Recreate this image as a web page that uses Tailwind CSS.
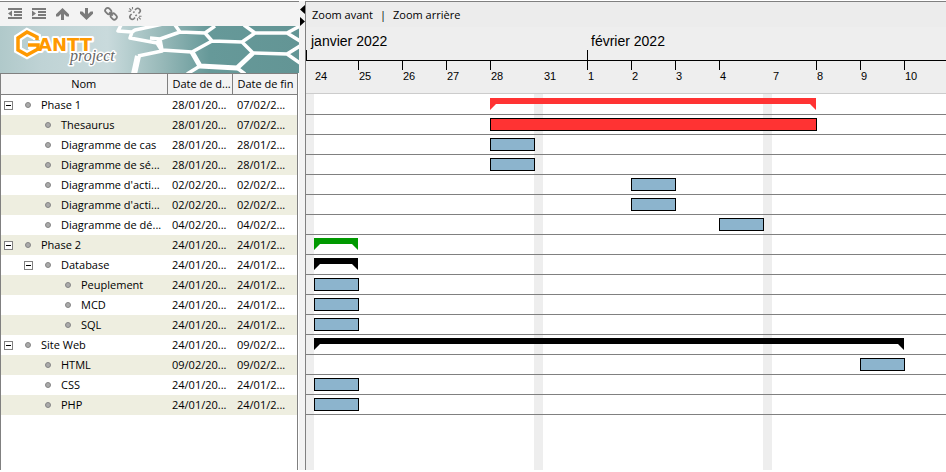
<!DOCTYPE html>
<html lang="fr">
<head>
<meta charset="utf-8">
<meta name="viewport" content="width=device-width, initial-scale=1">
<title>GanttProject</title>
<script src="https://cdn.jsdelivr.net/npm/@tailwindcss/browser@4"></script>
</head>
<body class="flex min-h-screen bg-white pt-px pb-[2px] font-['Open_Sans','Noto_Sans',sans-serif] text-[11px] leading-[20px] text-black">

<section class="flex w-[299px] shrink-0 flex-col border-t border-[#808080]">
  <div class="flex h-[24px] items-center gap-[8px] bg-[#f3f3f3] px-[7px] text-[#7b7b7b]" role="toolbar" aria-label="Tâches">
    <button type="button" aria-label="Désindenter" class="size-[16px]">
      <svg class="size-[16px]" viewBox="0 0 16 16" fill="currentColor"><path d="M1 2h14v2H1zM7 5h8v2H7zM7 8h8v2H7zM1 11h14v2H1zM1 7.500l4-3v6z"/></svg>
    </button>
    <button type="button" aria-label="Indenter" class="size-[16px]">
      <svg class="size-[16px]" viewBox="0 0 16 16" fill="currentColor"><path d="M1 2h14v2H1zM7 5h8v2H7zM7 8h8v2H7zM1 11h14v2H1zM5 7.500l-4-3v6z"/></svg>
    </button>
    <button type="button" aria-label="Monter" class="size-[16px]">
      <svg class="size-[16px]" viewBox="0 0 16 16" fill="currentColor"><path d="M7.500 2L14 8.300V10.500H11.600L9 8V14H6V8L3.400 10.500H1V8.300z"/></svg>
    </button>
    <button type="button" aria-label="Descendre" class="size-[16px]">
      <svg class="size-[16px]" viewBox="0 0 16 16" fill="currentColor"><path d="M7.500 14L14 7.700V5.500H11.600L9 8V2H6V8L3.400 5.500H1V7.700z"/></svg>
    </button>
    <button type="button" aria-label="Lier" class="size-[16px]">
      <svg class="size-[16px]" viewBox="0 0 16 16" fill="none" stroke="currentColor" stroke-width="1.800"><rect x="2" y="2.500" width="6.500" height="5" rx="2.400" transform="rotate(45 5.200 5)"/><rect x="7.500" y="8" width="6.500" height="5" rx="2.400" transform="rotate(45 10.700 10.500)"/><path d="M6.300 6.200l3.400 3.400"/></svg>
    </button>
    <button type="button" aria-label="Délier" class="size-[16px]">
      <svg class="size-[16px]" viewBox="0 0 16 16" fill="none" stroke="currentColor" stroke-width="1.600"><path d="M8 4l1-1c2.300-2 5.600 1 3.700 3.300L11.500 7.500M8 11.500L7 12.600C4.700 14.600 1.500 11.600 3.400 9.200L4.600 8M7.500 5.500L6.300 6.700M8.500 10L9.700 8.800"/><path stroke-width="1.100" d="M1.500 5.300H4M2.300 2.300l2.200 2.200M5.500 1v2.300M14.500 10.300H12M13.700 13.400l-2.200-2.200M10.500 14.600v-2.300"/></svg>
    </button>
  </div>

  <svg class="block h-[47px] w-[299px]" viewBox="0 0 299 47" role="img" aria-label="GanttProject">
    <defs>
      <linearGradient id="sea"><stop offset="0" stop-color="#b0c9ca"/><stop offset=".14" stop-color="#bfd3d5"/><stop offset=".36" stop-color="#c9dadc"/><stop offset=".42" stop-color="#b9d0d1"/><stop offset=".54" stop-color="#98b9b9"/><stop offset=".7" stop-color="#669999"/><stop offset="1" stop-color="#639595"/></linearGradient>
    </defs>
    <path fill="url(#sea)" d="M0 0h299v47H0z"/>
    <g fill="none" stroke="#fff" stroke-width="3.500" stroke-linejoin="round">
      <path d="M121-1l-3 6 14 1 3-2 28-6M132 6l-2 6 27 5 3-4M157 17l5 8-24 5M175-1l5 7-20 7-10-1M180 6l25 1 10-7M205 7l7 8 30 1 13-9-11-8M255 7h32l13-7M287 7l13 8M212 15l-20 11-30-2-2-11M242 16l11 11 34 1 13-8M287 28l13 9M187 48l13-8M237 42l8 6"/>
      <path stroke-width="5" d="M192 26l8 14 37 2 16-15"/>
      <path stroke-width="6" d="M138 30l-4 18"/>
    </g>
    <path d="M37 14V11L27 6 18 12V24L27 29 38 23V19H28" fill="none" stroke="#fff" stroke-width="8"/>
    <text x="38" y="25" font-family="DejaVu Sans" font-weight="700" font-size="18" fill="#ff9900" stroke="#fff" stroke-width="4" stroke-linejoin="round" paint-order="stroke">ANTT</text>
    <path d="M37 14V11L27 6 18 12V24L27 29 38 23V19H28" fill="none" stroke="#ff9900" stroke-width="3.500"/>
    <text x="70" y="35" font-family="Liberation Serif" font-style="italic" font-size="16" fill="#666" stroke="#fff" stroke-width="3" stroke-linejoin="round" paint-order="stroke">project</text>
  </svg>

  <div class="mr-px flex-1 border-x border-t border-[#808080] bg-white">
    <table class="w-full table-fixed border-collapse">
      <colgroup><col><col class="w-[65px]"><col class="w-[65px]"></colgroup>
      <thead class="bg-[#f3f3f3]">
        <tr class="h-[20px] border-b border-[#808080]">
          <th scope="col" class="border-r border-[#808080] p-0 font-normal">Nom</th>
          <th scope="col" class="border-r border-[#808080] p-0 pl-[5px] text-left font-normal whitespace-nowrap">Date de d...</th>
          <th scope="col" class="p-0 pl-[5px] text-left font-normal whitespace-nowrap">Date de fin</th>
        </tr>
      </thead>
      <tbody id="tasks"></tbody>
    </table>
  </div>
</section>

<div class="flex w-[6px] shrink-0 flex-col items-end bg-[#f3f3f3] pt-[4px]">
  <button type="button" aria-label="Replier à gauche" class="h-[9px] w-[5px]"><svg class="block h-[9px] w-[5px]" viewBox="0 0 5 9"><path d="M5 0v9L0 4.500z"/></svg></button>
  <button type="button" aria-label="Replier à droite" class="mt-[3px] h-[9px] w-[5px]"><svg class="block h-[9px] w-[5px]" viewBox="0 0 5 9"><path d="M0 0v9l5-4.500z"/></svg></button>
</div>

<main class="flex min-w-0 flex-1 flex-col overflow-hidden border-t border-l border-[#808080]">
  <nav class="flex h-[25px] items-center gap-[7px] bg-[#ececec] px-[6px]">
    <button type="button">Zoom avant</button><span>|</span><button type="button">Zoom arrière</button>
  </nav>
  <header class="border-b border-[#ccc] bg-[#eee] font-['Liberation_Sans',Arial,sans-serif]">
    <svg class="block h-[66px] w-full" aria-label="Calendrier">
      <path d="M0 33.500H3000M.5 23v10M281.500 23v20M52.500 33v10M96.500 33v10M140.500 33v10M184.500 33v10M325.500 33v10M369.500 33v10M413.500 33v10M510.500 33v10M554.500 33v10M598.500 33v10" fill="none" stroke="#000"/>
      <g font-size="14"><text x="5" y="19">janvier 2022</text><text x="285" y="19">février 2022</text></g>
      <g font-size="11"><text x="9" y="53">24</text><text x="53" y="53">25</text><text x="97" y="53">26</text><text x="141" y="53">27</text><text x="185" y="53">28</text><text x="238" y="53">31</text><text x="282" y="53">1</text><text x="326" y="53">2</text><text x="370" y="53">3</text><text x="414" y="53">4</text><text x="467" y="53">7</text><text x="511" y="53">8</text><text x="555" y="53">9</text><text x="599" y="53">10</text></g>
    </svg>
  </header>
  <div class="grid flex-1 grid-cols-[8px_220px_9px_220px_9px_1fr] grid-rows-1">
    <div class="col-start-1 row-start-1 bg-[#eee]"></div>
    <div class="col-start-3 row-start-1 bg-[#eee]"></div>
    <div class="col-start-5 row-start-1 bg-[#eee]"></div>
    <div id="bars" class="col-span-full col-start-1 row-start-1 pt-px"></div>
  </div>
</main>

<script>
// name, depth, start, end, bar offset, bar width, kind (task, critical, or a summary colour), expandable
const tasks = [
  ['Phase 1', 0, '28/01/20...', '07/02/2...', 184, 326, '#ff3333', true],
  ['Thesaurus', 1, '28/01/20...', '07/02/2...', 184, 327, 'critical'],
  ['Diagramme de cas', 1, '28/01/20...', '28/01/2...', 184, 45, 'task'],
  ['Diagramme de sé...', 1, '28/01/20...', '28/01/2...', 184, 45, 'task'],
  ["Diagramme d'acti...", 1, '02/02/20...', '02/02/2...', 325, 45, 'task'],
  ["Diagramme d'acti...", 1, '02/02/20...', '02/02/2...', 325, 45, 'task'],
  ['Diagramme de dé...', 1, '04/02/20...', '04/02/2...', 413, 45, 'task'],
  ['Phase 2', 0, '24/01/20...', '24/01/2...', 8, 44, '#009900', true],
  ['Database', 1, '24/01/20...', '24/01/2...', 8, 44, '#000000', true],
  ['Peuplement', 2, '24/01/20...', '24/01/2...', 8, 45, 'task'],
  ['MCD', 2, '24/01/20...', '24/01/2...', 8, 45, 'task'],
  ['SQL', 2, '24/01/20...', '24/01/2...', 8, 45, 'task'],
  ['Site Web', 0, '24/01/20...', '09/02/2...', 8, 590, '#000000', true],
  ['HTML', 1, '09/02/20...', '09/02/2...', 554, 45, 'task'],
  ['CSS', 1, '24/01/20...', '24/01/2...', 8, 45, 'task'],
  ['PHP', 1, '24/01/20...', '24/01/2...', 8, 45, 'task']
];
const toggle = '<button type="button" aria-label="Replier" class="flex size-[9px] shrink-0 items-center justify-center border border-[#808080] bg-white"><span class="h-px w-[5px] bg-black"></span></button>';
const spacer = '<span class="w-[9px] shrink-0"></span>';
document.getElementById('tasks').innerHTML = tasks.map(([name, depth, start, end, x, w, kind, open]) => `
  <tr class="h-[20px] even:bg-[#eeeee0]">
    <td class="p-0"><div class="flex h-[20px] items-center overflow-hidden whitespace-nowrap" style="padding-left:${3 + depth * 20}px">
      ${open ? toggle : spacer}<span class="mr-[10px] ml-[12px] size-[6px] shrink-0 rounded-full border border-[#858585] bg-[#aaa]"></span>${name}</div></td>
    <td class="p-0 pl-[5px] whitespace-nowrap">${start}</td>
    <td class="p-0 pl-[5px] whitespace-nowrap">${end}</td>
  </tr>`).join('');
document.getElementById('bars').innerHTML = tasks.map(([name, depth, start, end, x, w, kind]) => {
  let bar;
  if (kind === 'task') bar = `<div class="h-[13px] border border-black bg-[#8cb4cd]" style="margin-left:${x}px;width:${w}px"></div>`;
  else if (kind === 'critical') bar = `<div class="h-[13px] border border-black bg-[#ff3333]" style="margin-left:${x}px;width:${w}px"></div>`;
  else bar = `<svg class="block h-[12px]" style="margin-left:${x}px;width:${w}px" viewBox="0 0 ${w} 12"><path fill="${kind}" d="M0 0H${w}V12L${w - 6} 6H6L0 12z"/></svg>`;
  return `<div class="h-[20px] border-b border-[#808080] pt-[3px]">${bar}</div>`;
}).join('');
</script>
</body>
</html>
